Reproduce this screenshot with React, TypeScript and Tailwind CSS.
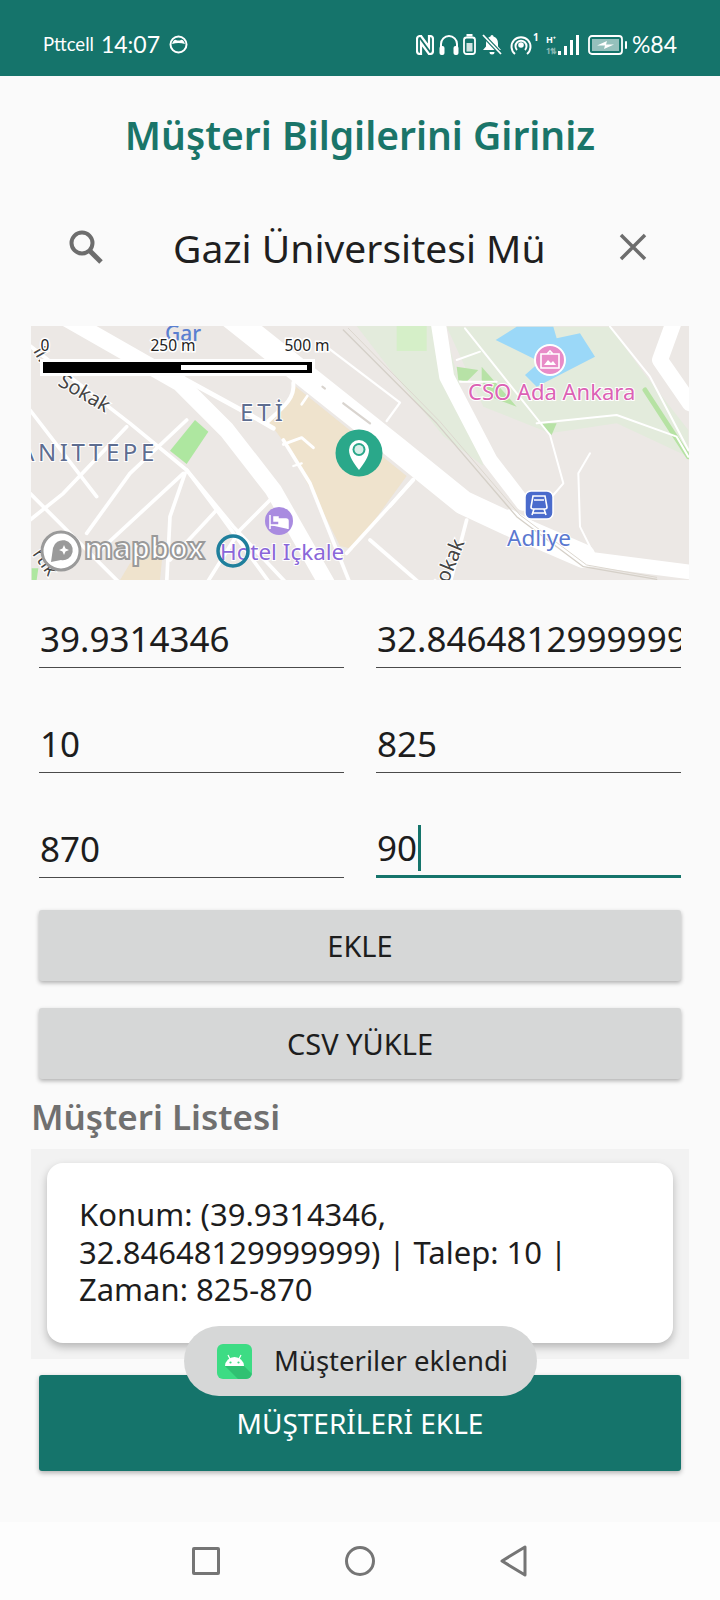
import React from "react";

const L = (props: { d: string; w?: number; c?: string }) => (
  <path d={props.d} fill="none" stroke={props.c ?? "#fff"} strokeWidth={props.w ?? 10} strokeLinecap="round" strokeLinejoin="round" />
);

function MapView() {
  return (
    <svg viewBox="0 0 658 254" className="block w-full h-full" style={{ fontFamily: "'Noto Sans', sans-serif" }}>
      <rect width="658" height="254" fill="#ece8e5" />
      {/* beige block, coordinates of the centre crop */}
      <g transform="translate(199,0) scale(0.33333)">
        <polygon points="195,180 530,450 370,670 330,660 270,540 170,360 115,285 170,240" fill="#efe3cd" />
        <polygon points="380,0 640,0 760,420 640,330 480,130" fill="#e3ebdc" />
        <polygon points="500,0 590,0 590,75 500,75" fill="#d5efc8" />
      </g>
      {/* left half, coordinates of the left crop */}
      <g transform="translate(-11,-6) scale(0.33333)">
        <polygon points="300,780 330,730 430,680 420,780" fill="#efe3cd" />
        <polygon points="525,300 565,335 500,432 450,392" fill="#aee7a0" />
        <polygon points="35,745 55,745 50,780 35,780" fill="#aee7a0" />
        <L d="M130,-10 L480,190 L620,330 L760,510 L920,790" w={50} />
        <L d="M20,70 L330,310 L500,450 L640,620 L800,790" w={11} />
        <L d="M790,360 L870,490 L990,790" w={11} />
        <L d="M30,270 L230,530" w={11} />
        <L d="M320,320 L130,520 L30,600" w={11} />
        <L d="M500,300 L330,460 L200,640" w={11} />
        <L d="M490,460 L230,700" w={11} />
        <L d="M495,460 L450,590 L440,790" w={11} />
        <L d="M590,570 L450,720" w={11} />
        <L d="M750,540 L660,630 L560,790" w={11} />
        <L d="M30,520 L300,790" w={11} />
        <L d="M500,450 L590,570 L750,790" w={11} />
        <L d="M490,175 L700,290 L760,325" w={14} />
        <L d="M735,50 L710,85" w={8} />
      </g>
      {/* centre crop roads */}
      <g transform="translate(199,0) scale(0.33333)">
        <L d="M0,-30 L500,368 L700,530 L840,595 L1060,690" w={72} />
        <L d="M300,70 L510,230 L470,285" w={7} />
        <L d="M190,170 C195,215 165,240 115,285" w={12} />
        <L d="M160,355 L215,335 L250,365" w={9} />
        <L d="M190,420 L215,412" w={7} />
        <L d="M215,235 L232,210" w={8} />
        <L d="M340,232 L420,292" w={7} c="#d9d4cf" />
        <L d="M277,182 L285,188" w={6} c="#d9d4cf" />
        <L d="M550,460 L480,540" w={11} />
      </g>
      {/* right half, coordinates of the right crop */}
      <g transform="translate(319,-6) scale(0.33333)">
        <polygon points="290,20 780,20 890,170 1015,330 1015,410 800,310 600,340 400,260" fill="#e3ebdc" />
        <polygon points="437,60 500,20 610,20 620,55 690,40 735,110 560,200 525,165 570,125" fill="#9bd8f8" />
        <polygon points="395,140 500,260 420,230 395,180" fill="#b7e2a6" />
        <polygon points="570,310 620,310 605,345" fill="#b7e2a6" />
        <polygon points="320,140 385,150 350,185 325,180" fill="#b7e2a6" />
        <L d="M885,210 L1015,410" w={15} c="#b6e2a3" />
        <L d="M265,10 L290,170 L420,420 L520,550" w={45} />
        <L d="M970,10 L930,120 L1020,250" w={48} />
        <L d="M480,590 L700,715 L1030,757" w={44} />
        <L d="M-20,30 L260,310 L500,590 L700,740 L920,778" w={4} c="#d5d0c8" />
        <L d="M-5,25 L270,305 L510,585 L710,735 L920,772" w={3} c="#dcd7cf" />
        <L d="M345,25 L600,345 L640,490 L610,525" w={6} />
        <L d="M560,310 L800,285 L980,350 L1015,410" w={6} />
        <L d="M720,400 L685,460 L690,620 L725,690" w={6} />
        <L d="M780,20 L900,170 L1015,390" w={6} />
        <L d="M320,120 L390,95 M330,185 L440,185" w={6} />
        <L d="M190,480 L-10,700" w={11} />
        <L d="M350,600 L300,790" w={11} />
        <L d="M60,660 L210,790" w={11} />
      </g>
      {/* labels */}
      <text transform="translate(26,59) rotate(30)" fontSize="20" fill="#444" stroke="#fff" strokeWidth="2" paintOrder="stroke">Sokak</text>
      <text x="-12" y="135" fontSize="24" letterSpacing="3.6" fill="#5e6d90" stroke="#fff" strokeWidth="2" paintOrder="stroke">ANITTEPE</text>
      <text x="209" y="95" fontSize="24" letterSpacing="4" fill="#5e6d90" stroke="#fff" strokeWidth="2" paintOrder="stroke">ETİ</text>
      <text x="134" y="15" fontSize="21" fontWeight="500" fill="#5a7fd0">Gar</text>
      <text transform="translate(413,268) rotate(-68)" fontSize="20" fill="#444" stroke="#fff" strokeWidth="2" paintOrder="stroke">Sokak</text>
      <text transform="translate(1,228) rotate(55)" fontSize="18" fill="#444" stroke="#fff" strokeWidth="2" paintOrder="stroke">rtık</text>
      <text transform="translate(2,25) rotate(60)" fontSize="18" fill="#444" stroke="#fff" strokeWidth="2" paintOrder="stroke">il.</text>

      {/* scale */}
      <rect x="9" y="33" width="275" height="17" fill="#fff" />
      <rect x="12" y="36" width="269" height="11" fill="#000" />
      <rect x="150" y="39" width="126" height="5" fill="#fff" />
      <g fontSize="15.5" fill="#222" stroke="#fff" strokeWidth="3" paintOrder="stroke" textAnchor="middle">
        <text x="14" y="25">0</text>
        <text x="142" y="25">250 m</text>
        <text x="276" y="25">500 m</text>
      </g>

      {/* marker */}
      <circle cx="328" cy="127" r="23.5" fill="#2aa88a" />
      <path d="M328 144 C323 137 318 131 318 124 a10 10 0 0 1 20 0 C338 131 333 137 328 144Z" fill="#fff" />
      <circle cx="328" cy="123.500" r="6.500" fill="#2aa88a" />
      <circle cx="328" cy="123.500" r="4.500" fill="#d7efe8" />

      {/* hotel */}
      <circle cx="248" cy="195" r="14" fill="#a98be0" />
      <path d="M239 189 V203 M239 199 H257 V203 M243 191 h4 v4 h-4Z M248 193 h7 a2 2 0 0 1 2 2 v3 h-9Z" stroke="#fff" strokeWidth="1.5" fill="#fff" />
      <text x="189" y="234" fontSize="22.5" fill="#8a67d9" stroke="#fff" strokeWidth="2" paintOrder="stroke">Hotel Içkale</text>
      <circle cx="202" cy="225" r="15" fill="none" stroke="#1f7f9c" strokeWidth="3.5" />

      {/* mapbox logo */}
      <circle cx="30" cy="225" r="19" fill="#fff" stroke="#9a9a9a" strokeWidth="3" />
      <path d="M20 236 L22 222 a10 10 0 1 1 8 12 Z" fill="#9a9a9a" />
      <path d="M33 219 l1.5 3.5 3.5 1.5 -3.5 1.5 -1.5 3.5 -1.5 -3.5 -3.5 -1.5 3.5 -1.5Z" fill="#fff" />
      <text x="53" y="233" fontSize="30" fontWeight="700" fill="#fff" stroke="#9a9a9a" strokeWidth="2">mapbox</text>

      {/* CSO */}
      <circle cx="519" cy="34" r="15" fill="#e88cc8" stroke="#fff" strokeWidth="2" />
      <path d="M510 28 h18 v14 h-18Z M516 28 l3 -3 3 3" fill="none" stroke="#fff" strokeWidth="1.6" />
      <path d="M513 39 l4 -5 3 3 2 -2 3 4Z" fill="#fff" />
      <text x="437" y="74" fontSize="22" fill="#db62b4" stroke="#fff" strokeWidth="2" paintOrder="stroke">CSO Ada Ankara</text>

      {/* Adliye */}
      <rect x="494" y="165" width="28" height="28" rx="6" fill="#4a6bcc" stroke="#fff" strokeWidth="1.5" />
      <path d="M502 170 h12 l2 11 a2 2 0 0 1 -2 2 h-12 a2 2 0 0 1 -2 -2Z M503 174 h10 M501 187 h14 M503 183 l-2 6 M513 183 l2 6" fill="none" stroke="#fff" strokeWidth="1.6" />
      <text x="476" y="220" fontSize="22.5" fill="#5a78d0" stroke="#fff" strokeWidth="2" paintOrder="stroke">Adliye</text>
    </svg>
  );
}

function Field({ value, active, cursor }: { value: string; active?: boolean; cursor?: boolean }) {
  return (
    <div className={`h-[73px] flex items-center overflow-hidden ${active ? "border-b-[3px] border-[#15746b]" : "border-b-[1.5px] border-[#4a4a4a]"}`}>
      <span className="text-[35px] text-[#1d1d1d] whitespace-nowrap pt-4 pl-px flex items-center">
        {value}
        {cursor && <span className="inline-block w-[3px] h-[46px] bg-[#15746b] ml-px" />}
      </span>
    </div>
  );
}

function StatusIcons() {
  return (
    <div className="flex items-center text-white">
      <svg width="18" height="20" viewBox="0 0 18 20" className="mr-[5px]" fill="none" stroke="#fff" strokeWidth="2.2">
        <path d="M6 1 H4 a3 3 0 0 0 -3 3 v12 a3 3 0 0 0 3 3 h1 V8 l8 11 h1 a3 3 0 0 0 3 -3 V4 a3 3 0 0 0 -3 -3 h-1 V12 L5 1" />
      </svg>
      <svg width="20" height="21" viewBox="0 0 20 21" className="mr-[4px]" fill="none">
        <path d="M2 17 V10 a8 8 0 0 1 16 0 v7" stroke="#fff" strokeWidth="2" />
        <rect x="0.5" y="12" width="5" height="9" rx="2" fill="#fff" />
        <rect x="14.5" y="12" width="5" height="9" rx="2" fill="#fff" />
      </svg>
      <svg width="13" height="21" viewBox="0 0 13 21" className="mr-[6px]" fill="none">
        <rect x="3.5" y="0" width="6" height="2.5" fill="#fff" />
        <rect x="1" y="3.5" width="11" height="16.5" rx="2.5" stroke="#fff" strokeWidth="1.8" />
        <rect x="3.5" y="9" width="6" height="8.5" fill="#fff" opacity="0.8" />
      </svg>
      <svg width="20" height="21" viewBox="0 0 20 21" className="mr-[8px]" fill="#fff">
        <path d="M10 1 a1.5 1.5 0 0 1 1.5 1.5 c3 1 4.5 3.5 4.5 7 v3 l3 3.5 H1 l3 -3.5 v-3 c0 -3.500 1.500 -6 4.500 -7 A1.500 1.500 0 0 1 10 1Z M7.500 18 h5 a2.500 2.500 0 0 1 -5 0Z" />
        <path d="M1 1 L19 20" stroke="#15746b" strokeWidth="4" />
        <path d="M1 1 L19 20" stroke="#fff" strokeWidth="1.8" />
      </svg>
      <svg width="22" height="22" viewBox="0 0 22 22" fill="none" stroke="#fff" strokeWidth="2">
        <path d="M5 20 A9.500 9.500 0 1 1 17 20" />
        <path d="M7 16 A5.500 5.500 0 1 1 15 16" />
        <circle cx="11" cy="11" r="1.800" fill="#fff" />
      </svg>
      <span className="text-[10px] font-bold leading-none self-start mt-[-1px] ml-px w-[13px]">1</span>
      <div className="relative w-[11px] h-[20px] mr-px">
        <span className="absolute top-0 left-0 text-[9px] font-bold leading-none">H⁺</span>
        <span className="absolute bottom-0 left-0 text-[8px] font-bold leading-none opacity-50">1⇅</span>
      </div>
      <svg width="21" height="20" viewBox="0 0 21 20" className="mr-[9px]" fill="#fff">
        <rect x="0" y="16" width="3" height="4" />
        <rect x="6" y="11" width="3" height="9" />
        <rect x="12" y="5" width="3" height="15" />
        <rect x="18" y="0" width="3" height="20" />
      </svg>
      <svg width="39" height="20" viewBox="0 0 39 20" className="mr-[5px]" fill="none">
        <rect x="1" y="1" width="33" height="18" rx="3" stroke="#fff" strokeWidth="1.800" />
        <rect x="4" y="4" width="27" height="12" fill="#fff" opacity="0.55" />
        <path d="M9 10.500 L19 6 L18 9.500 L26 9.500 L16 14 L17 10.500Z" fill="#fff" />
        <rect x="37" y="6" width="2" height="8" rx="1" fill="#fff" />
      </svg>
      <span className="text-[23px] leading-none" style={{ fontFamily: "Lato, sans-serif" }}>%84</span>
    </div>
  );
}

export default function App() {
  return (
    <div className="relative w-[720px] h-[1600px] overflow-hidden bg-[#fafafa] flex flex-col" style={{ fontFamily: "'Noto Sans', sans-serif" }}>
      {/* status bar */}
      <div className="h-[76px] shrink-0 bg-[#15746b] flex items-center justify-between pl-[43px] pr-[43px] pt-[13px] text-white">
        <div className="flex items-center" style={{ fontFamily: "Lato, sans-serif" }}>
          <span className="text-[18.5px] mr-[7px]">Pttcell</span>
          <span className="text-[23px] mr-[9px]">14:07</span>
          <svg width="19" height="19" viewBox="0 0 19 19" fill="none">
            <circle cx="9.500" cy="9.500" r="8" stroke="#fff" strokeWidth="2" />
            <path d="M3 9 Q5 4 7 5 Q9.500 6 12 5 Q14 4 16 9 Q9.500 7 3 9Z" fill="#fff" />
          </svg>
        </div>
        <StatusIcons />
      </div>

      {/* title */}
      <div className="h-[120px] shrink-0 flex items-center justify-center pb-[4px]">
        <h1 className="text-[39px] font-semibold text-[#1a7569] leading-none">Müşteri Bilgilerini Giriniz</h1>
      </div>

      {/* search */}
      <div className="h-[102px] shrink-0 flex items-center pl-[69px] pr-[73px]">
        <svg width="34" height="34" viewBox="0 0 34 34" fill="none" stroke="#6d6d6d">
          <circle cx="13" cy="13" r="10.500" strokeWidth="4" />
          <path d="M21 21 L32 32" strokeWidth="5" />
        </svg>
        <span className="ml-[70px] text-[39px] text-[#1f1f1f] flex-1 leading-none">Gazi Üniversitesi Mü</span>
        <svg width="28" height="28" viewBox="0 0 28 28" stroke="#6d6d6d" strokeWidth="3.500">
          <path d="M2 2 L26 26 M26 2 L2 26" />
        </svg>
      </div>

      {/* map */}
      <div className="mt-[28px] mx-[31px] h-[254px] shrink-0 overflow-hidden">
        <MapView />
      </div>

      {/* inputs */}
      <div className="grid grid-cols-2 gap-x-[32px] gap-y-[32px] mt-[15px] mx-[39px] shrink-0">
        <Field value="39.9314346" />
        <Field value="32.84648129999999" />
        <Field value="10" />
        <Field value="825" />
        <Field value="870" />
        <Field value="90" active cursor />
      </div>

      {/* buttons */}
      <button className="mt-[32px] mx-[39px] h-[71px] shrink-0 rounded-[3px] bg-[#d6d7d7] text-[29px] font-normal text-[#1d1d1d] shadow-[0_2px_4px_rgba(0,0,0,0.3)]">EKLE</button>
      <button className="mt-[27px] mx-[39px] h-[71px] shrink-0 rounded-[3px] bg-[#d6d7d7] text-[29px] font-normal text-[#1d1d1d] shadow-[0_2px_4px_rgba(0,0,0,0.3)]">CSV YÜKLE</button>

      {/* list */}
      <div className="h-[70px] shrink-0 pl-[31px] pt-[20px] text-[35px] font-semibold text-[#707070] leading-none">Müşteri Listesi</div>
      <div className="mx-[31px] h-[210px] shrink-0 bg-[#f2f2f2] px-[16px] pt-[14px]">
        <div className="h-[180px] rounded-[16px] bg-white shadow-[0_4px_8px_rgba(0,0,0,0.25)] pl-[32px] pr-[24px] pt-[33px] text-[31px] leading-[37.5px] text-[#1d1d1d]">
          Konum: (39.9314346, 32.84648129999999) | Talep: 10 | Zaman: 825-870
        </div>
      </div>

      <button className="mt-[16px] mx-[39px] h-[96px] shrink-0 rounded-[3px] bg-[#15746b] text-[28px] font-normal text-white shadow-[0_2px_5px_rgba(0,0,0,0.3)]">MÜŞTERİLERİ EKLE</button>

      {/* nav */}
      <div className="mt-auto h-[78px] shrink-0 bg-[#fdfdfd] flex items-center justify-center pb-[1px]">
        <div className="w-[154px] flex justify-center">
          <div className="w-[28px] h-[28px] border-[3px] border-[#757575] rounded-[2px]" />
        </div>
        <div className="w-[154px] flex justify-center">
          <div className="w-[30px] h-[30px] border-[3px] border-[#757575] rounded-full" />
        </div>
        <div className="w-[154px] flex justify-center">
          <svg width="28" height="32" viewBox="0 0 28 32" fill="none" stroke="#757575" strokeWidth="3" strokeLinejoin="round">
            <path d="M25 2 V30 L2 16 Z" />
          </svg>
        </div>
      </div>

      {/* toast */}
      <div className="absolute left-[184px] top-[1326px] w-[353px] h-[70px] rounded-full bg-[#d6d7d7] flex items-center pl-[33px]">
        <svg width="35" height="35" viewBox="0 0 35 35">
          <rect width="35" height="35" rx="6" fill="#3ddc84" />
          <path d="M8 22 a9.500 9 0 0 1 19 0 Z" fill="#fff" />
          <path d="M8 22 H27 L35 30 V29 a6 6 0 0 1 -6 6 H21Z" fill="#2bb56b" opacity="0.7" />
          <path d="M11 11 L13 15 M24 11 L22 15" stroke="#fff" strokeWidth="1.200" />
          <circle cx="13.500" cy="18.500" r="1.100" fill="#3ddc84" />
          <circle cx="21.500" cy="18.500" r="1.100" fill="#3ddc84" />
        </svg>
        <span className="ml-[22px] text-[27.5px] text-[#1f1f1f] whitespace-nowrap">Müşteriler eklendi</span>
      </div>
    </div>
  );
}
